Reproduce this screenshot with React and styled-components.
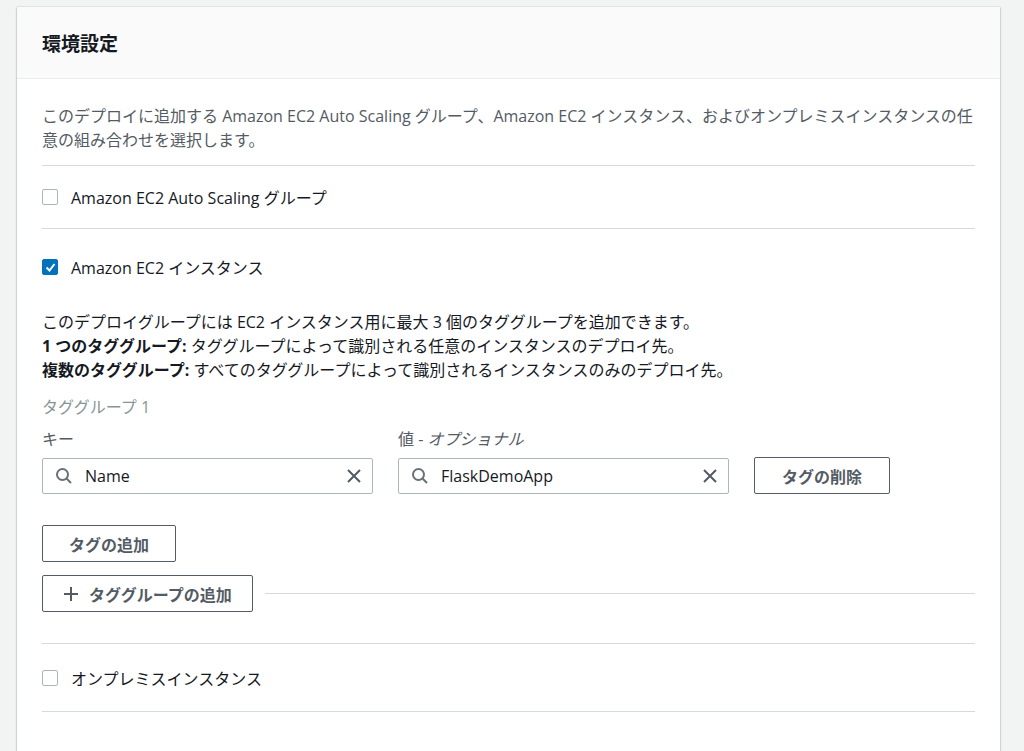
import React from "react";
import styled, { createGlobalStyle } from "styled-components";

const G = createGlobalStyle`
  body{margin:0;background:#f2f3f3;font-family:"Open Sans","Noto Sans CJK JP",sans-serif;color:#16191f;}
`;
const Page = styled.div`height:751px;overflow:hidden;padding:7px 24px 0 17px;`;
const Card = styled.div`background:#fff;box-shadow:0 1px 2px rgba(0,28,36,.3),0 0 1px rgba(0,28,36,.3);height:800px;`;
const Header = styled.div`background:#fafafa;border-bottom:1px solid #eaeded;height:71px;padding:0 25px;display:flex;align-items:center;font-size:19px;font-weight:700;`;
const Body = styled.div`padding:0 25px;`;
const P = styled.p`margin:0;font-size:16px;line-height:24px;color:${p=>p.c||"#545b64"};`;
const Intro = styled(P)`padding:25px 0 13px;`;
const Hr = styled.div`border-top:1px solid #d5dbdb;`;
const Check = styled.label`display:flex;align-items:center;gap:13px;font-size:16px;height:${p=>p.h}px;`;
const Box = styled.span`width:16px;height:16px;border-radius:2px;box-sizing:border-box;border:1px solid ${p=>p.on?"#0073bb":"#aab7b8"};background:${p=>p.on?"#0073bb":"#fff"};display:flex;align-items:center;justify-content:center;`;
const Info = styled.div`padding:5px 0 0;font-size:16px;line-height:24px;color:#16191f;b{font-weight:700;}`;
const Group = styled.div`color:#879596;font-size:16px;margin-top:12px;`;
const Row = styled.div`display:flex;gap:25px;align-items:flex-end;margin-top:8px;`;
const Field = styled.div`width:331px;display:flex;flex-direction:column;gap:8px;`;
const Label = styled.div`font-size:16px;color:#545b64;i{font-style:italic;}`;
const Input = styled.div`height:36px;box-sizing:border-box;border:1px solid #aab7b8;border-radius:2px;display:flex;align-items:center;padding:0 10px 0 12px;gap:12px;font-size:16px;`;
const Grow = styled.span`flex:1;`;
const Btn = styled.button`font-family:inherit;font-size:16px;font-weight:700;color:#545b64;background:#fff;border:1px solid #545b64;border-radius:2px;height:37px;padding:0 ${p=>p.px||20}px;display:flex;align-items:center;gap:10px;cursor:pointer;`;
const Line = styled.div`display:flex;align-items:center;gap:12px;margin-top:13px;`;
const Fill = styled.div`flex:1;border-top:1px solid #d5dbdb;`;

const Search = () => <svg width="18" height="18" viewBox="0 0 18 18" fill="none" stroke="#687078" strokeWidth="2"><circle cx="7.5" cy="7.5" r="5.5"/><path d="M11.5 11.5 16 16"/></svg>;
const X = () => <svg width="16" height="16" viewBox="0 0 16 16" stroke="#545b64" strokeWidth="2"><path d="M2 2l12 12M14 2 2 14"/></svg>;

export default function App(){
  return <><G/><Page><Card>
    <Header>環境設定</Header>
    <Body>
      <Intro>このデプロイに追加する Amazon EC2 Auto Scaling グループ、Amazon EC2 インスタンス、およびオンプレミスインスタンスの任意の組み合わせを選択します。</Intro>
      <Hr/>
      <Check h={62}><Box/>Amazon EC2 Auto Scaling グループ</Check>
      <Hr/>
      <Check h={76}><Box on><svg width="11" height="11" viewBox="0 0 11 11" fill="none" stroke="#fff" strokeWidth="2"><path d="M1.5 5.5l3 3 5-6.5"/></svg></Box>Amazon EC2 インスタンス</Check>
      <Info>このデプロイグループには EC2 インスタンス用に最大 3 個のタググループを追加できます。<br/><b>1 つのタググループ:</b> タググループによって識別される任意のインスタンスのデプロイ先。<br/><b>複数のタググループ:</b> すべてのタググループによって識別されるインスタンスのみのデプロイ先。</Info>
      <Group>タググループ 1</Group>
      <Row>
        <Field><Label>キー</Label><Input><Search/><Grow>Name</Grow><X/></Input></Field>
        <Field><Label>値 - <i>オプショナル</i></Label><Input><Search/><Grow>FlaskDemoApp</Grow><X/></Input></Field>
        <Btn px={27}>タグの削除</Btn>
      </Row>
      <div style={{height:31}}/>
      <Btn px={26}>タグの追加</Btn>
      <Line><Btn px={20}><svg width="16" height="16" viewBox="0 0 16 16" stroke="#545b64" strokeWidth="2"><path d="M8 1v14M1 8h14"/></svg>タググループの追加</Btn><Fill/></Line>
      <div style={{height:31}}/>
      <Hr/>
      <Check h={67}><Box/>オンプレミスインスタンス</Check>
      <Hr/>
    </Body>
  </Card></Page></>;
}
